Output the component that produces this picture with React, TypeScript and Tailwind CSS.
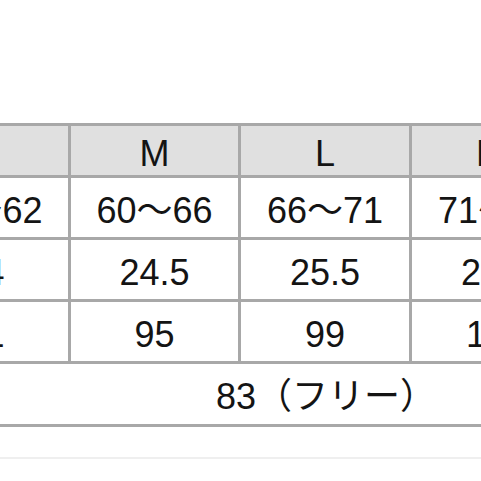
const sizes = ["S", "M", "L", "LL", "3L"];

const rows = [
  ["52～62", "60～66", "66～71", "71～76", "76～82"],
  ["24", "24.5", "25.5", "26.5", "27.5"],
  ["91", "95", "99", "103", "107"],
];

const cell = "flex items-center justify-center pt-[6px] leading-none whitespace-nowrap";

export default function App() {
  return (
    <div
      className="h-[481px] w-full overflow-hidden bg-white text-[36px] text-[#141414]"
      style={{ fontFamily: '"Liberation Sans", "Noto Sans CJK JP", sans-serif' }}
    >
      <div className="ml-[-102px] mt-[123px] grid w-[856px] grid-cols-[167px_167px_168px_168px_168px] gap-[3px] border-[3px] border-[#a8a8a8] bg-[#a8a8a8]">
        {/* header */}
        {sizes.map((s) => (
          <div key={s} className={`${cell} h-[49px] bg-[#e0e0e0]`}>
            {s}
          </div>
        ))}

        {/* body rows */}
        {rows.map((row, i) =>
          row.map((v, j) => (
            <div key={`${i}-${j}`} className={`${cell} h-[59px] bg-white`}>
              {v}
            </div>
          ))
        )}

        {/* free size row */}
        <div className={`${cell} col-span-5 h-[60px] bg-white`}>83（フリー）</div>
      </div>

      <div className="mt-[30px] h-[2px] w-full bg-[#efefef]" />
    </div>
  );
}
